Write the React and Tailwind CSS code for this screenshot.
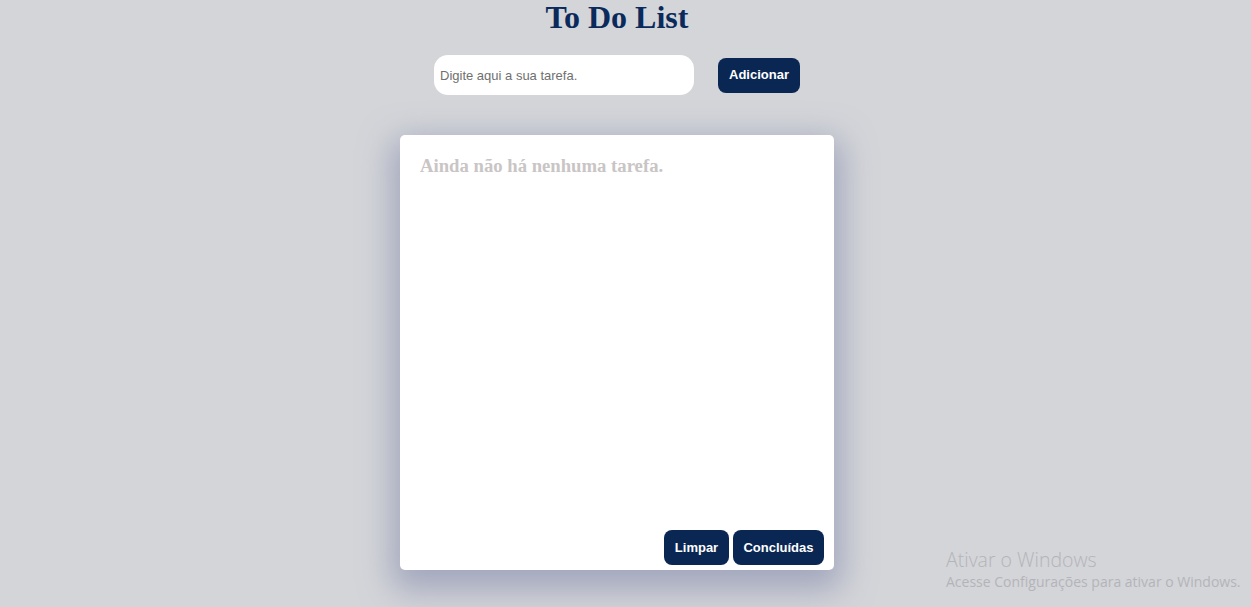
import React, { useState } from 'react';

function App() {
  const [task, setTask] = useState('');
  const [tasks, setTasks] = useState([]);

  const addTask = () => {
    if (!task.trim()) return;
    setTasks(prev => [...prev, { text: task, done: false }]);
    setTask('');
  };

  return (
    <div className="relative h-[607px] w-full overflow-hidden bg-[#d4d5d9]">
      <div className="w-[1234px] flex flex-col items-center">
        <h1 className="mt-[1px] text-[32px] leading-[32px] font-bold text-[#0a2a5c] font-['Liberation_Serif',serif]">
          To Do List
        </h1>

        <div className="mt-[22px] flex items-center gap-[24px]">
          <input
            value={task}
            onChange={e => setTask(e.target.value)}
            placeholder="Digite aqui a sua tarefa."
            className="w-[260px] h-[40px] rounded-[14px] bg-white px-[6px] text-[13px] text-[#333] placeholder:text-[#6f6f6f] outline-none font-['Liberation_Sans',Arial,sans-serif]"
          />
          <button
            onClick={addTask}
            className="w-[82px] h-[35px] rounded-[8px] bg-[#0a2753] text-white text-[13px] font-bold font-['Liberation_Sans',Arial,sans-serif]"
          >
            Adicionar
          </button>
        </div>

        <div className="mt-[40px] w-[434px] h-[435px] rounded-[5px] bg-white shadow-[0_12px_32px_8px_rgba(120,130,165,0.55)] flex flex-col">
          <div className="flex-1 px-[20px] pt-[20px]">
            {tasks.length === 0 ? (
              <p className="text-[18.7px] leading-[22px] font-bold text-[#c9c5c5] font-['Liberation_Serif',serif]">
                Ainda não há nenhuma tarefa.
              </p>
            ) : (
              tasks.map((t, i) => (
                <p key={i} className="text-[16px] font-['Liberation_Sans',Arial,sans-serif]">{t.text}</p>
              ))
            )}
          </div>
          <div className="flex justify-end gap-[4px] pr-[10px] pb-[5px]">
            <button
              onClick={() => setTasks([])}
              className="w-[65px] h-[35px] rounded-[8px] bg-[#0a2753] text-white text-[13px] font-bold font-['Liberation_Sans',Arial,sans-serif]"
            >
              Limpar
            </button>
            <button className="w-[91px] h-[35px] rounded-[8px] bg-[#0a2753] text-white text-[13px] font-bold font-['Liberation_Sans',Arial,sans-serif]">
              Concluídas
            </button>
          </div>
        </div>
      </div>

      {/* Windows activation watermark */}
      <div className="absolute left-[946px] top-[547px] text-[#b3b4b8] font-['Open_Sans','Noto_Sans',sans-serif] pointer-events-none">
        <div className="text-[19.5px] leading-[26px] font-light">Ativar o Windows</div>
        <div className="text-[14px] leading-[18px]">Acesse Configurações para ativar o Windows.</div>
      </div>
    </div>
  );
}

export default App;
